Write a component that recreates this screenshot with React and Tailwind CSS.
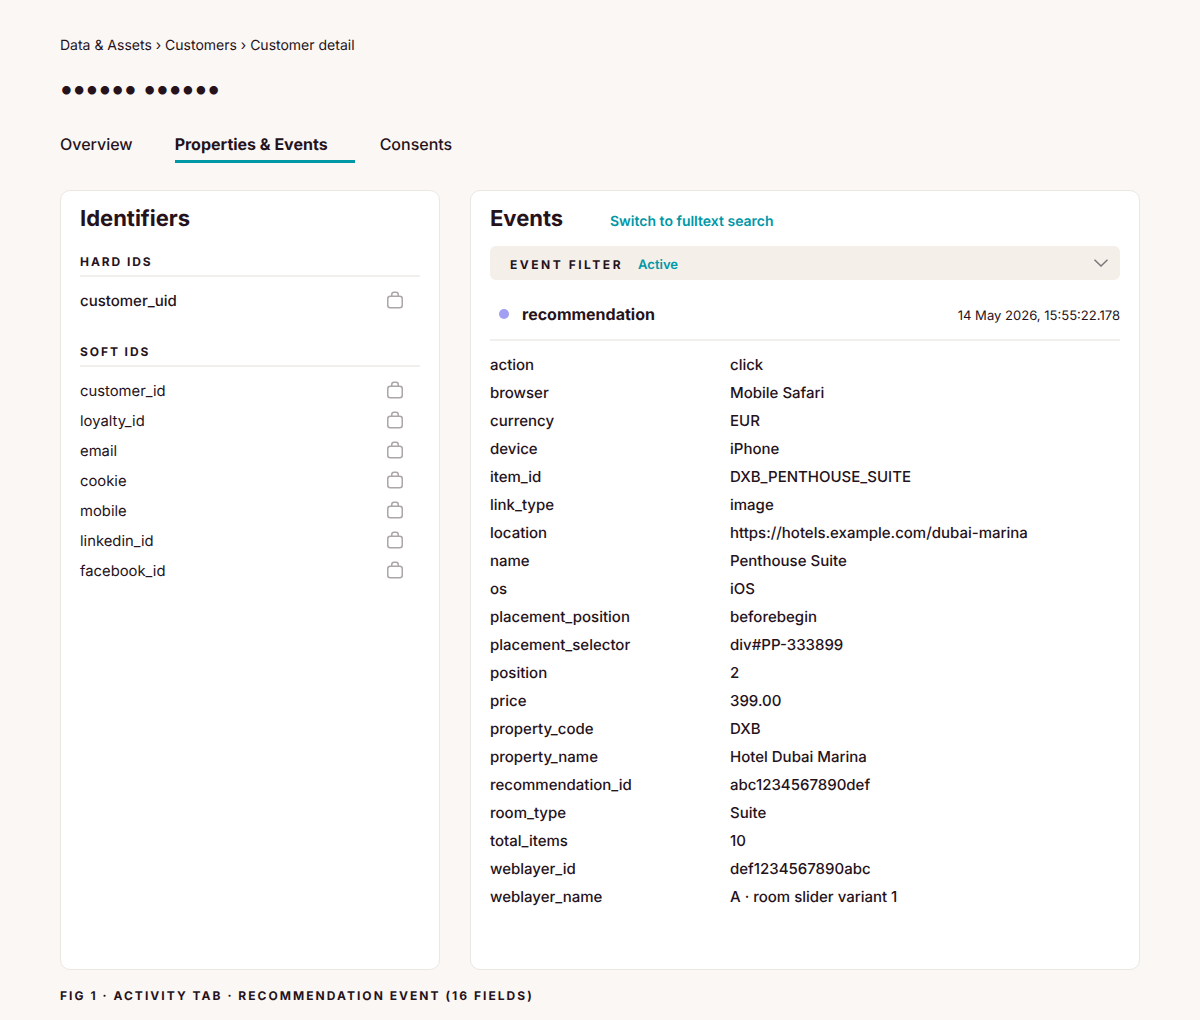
const hard = ["customer_uid"];
const soft = ["customer_id","loyalty_id","email","cookie","mobile","linkedin_id","facebook_id"];
const fields = [
["action","click"],["browser","Mobile Safari"],["currency","EUR"],["device","iPhone"],["item_id","DXB_PENTHOUSE_SUITE"],["link_type","image"],["location","https://hotels.example.com/dubai-marina"],["name","Penthouse Suite"],["os","iOS"],["placement_position","beforebegin"],["placement_selector","div#PP-333899"],["position","2"],["price","399.00"],["property_code","DXB"],["property_name","Hotel Dubai Marina"],["recommendation_id","abc1234567890def"],["room_type","Suite"],["total_items","10"],["weblayer_id","def1234567890abc"],["weblayer_name","A · room slider variant 1"],
];

function Lock() {
  return (
    <svg width="16" height="18" viewBox="0 0 16 18" fill="none" stroke="#aca6a8" strokeWidth="1.5" className="mr-[17px] shrink-0">
      <rect x="0.75" y="5.25" width="14.5" height="11.5" rx="2.5" />
      <path d="M4.75 5.25V3.5A2.25 2.25 0 0 1 7 1.25h2a2.25 2.25 0 0 1 2.25 2.25v1.75" />
    </svg>
  );
}

function IdRow({ name, strong }) {
  return (
    <div className={`flex h-[30px] items-center justify-between ${strong ? "text-[15px] font-medium" : "text-[14.8px]"}`}>
      <span className="pt-[2px]">{name}</span>
      <Lock />
    </div>
  );
}

function SectionHead({ children }) {
  return (
    <div className="border-b-2 border-[#f1efed] pb-[4px] text-[12px] leading-[18px] font-bold tracking-[0.16em]">{children}</div>
  );
}

export default function App() {
  return (
    <div className="h-[1020px] bg-[#faf7f4] px-[60px] pt-[36px] text-[#25121b] font-['Inter',sans-serif] [text-rendering:geometricPrecision]">
      <div className="text-[14px] leading-[20px]">Data &amp; Assets › Customers › Customer detail</div>
      <div className="mt-[16px] h-[32px] pt-[1px] text-[27px] leading-[32px] font-bold">•••••• ••••••</div>
      <div className="mt-[26px] flex h-[33px] text-[16px] leading-[24px] font-medium">
        <div className="mr-[43px] pt-[2px]">Overview</div>
        <div className="mr-[25px] -ml-px w-[180px] border-b-[3px] border-[#0097a7] pt-[2px] font-bold">Properties &amp; Events</div>
        <div className="pt-[2px]">Consents</div>
      </div>
      <div className="mt-[27px] flex h-[780px] gap-[30px]">
        <section className="w-[380px] rounded-[10px] border border-[#ebe7e3] bg-white px-[19px] pt-[13px]">
          <h2 className="text-[22px] leading-[30px] font-bold">Identifiers</h2>
          <div className="mt-[19px]"><SectionHead>HARD IDS</SectionHead></div>
          <div className="mt-[8px]">{hard.map((n) => <IdRow key={n} name={n} strong />)}</div>
          <div className="mt-[28px]"><SectionHead>SOFT IDS</SectionHead></div>
          <div className="mt-[8px]">{soft.map((n) => <IdRow key={n} name={n} />)}</div>
        </section>
        <section className="w-[670px] rounded-[10px] border border-[#ebe7e3] bg-white px-[19px] pt-[13px]">
          <div className="flex items-center">
            <h2 className="w-[120px] text-[22px] leading-[30px] font-bold">Events</h2>
            <span className="mt-[5px] text-[14px] font-semibold text-[#0097a7]">Switch to fulltext search</span>
          </div>
          <div className="mt-[12px] flex h-[34px] items-center justify-between rounded-[6px] bg-[#f4efe9] px-[20px] pr-[12px]">
            <div className="flex items-center gap-[15px] pt-[4px]">
              <span className="text-[12px] font-bold tracking-[0.21em]">EVENT FILTER</span>
              <span className="pt-[2px] text-[13px] font-semibold text-[#0097a7]">Active</span>
            </div>
            <svg width="14" height="8" viewBox="0 0 14 8" fill="none" stroke="#7f7578" strokeWidth="1.5"><path d="M0.5 0.75 7 7l6.5-6.25" /></svg>
          </div>
          <div className="mt-[11px] flex h-[50px] items-start justify-between border-b-2 border-[#f1efed] pt-[11px]">
            <div className="flex items-center">
              <span className="ml-[9px] mr-[13px] size-[10px] rounded-full bg-[#a29ff2]" />
              <span className="text-[16px] font-bold leading-[24px]">recommendation</span>
            </div>
            <span className="mt-[4px] text-[13.05px] leading-[20px]">14 May 2026, 15:55:22.178</span>
          </div>
          <div className="mt-[10px]">
            {fields.map(([k, v]) => (
              <div key={k} className="flex h-[28px] items-center text-[15px] font-medium">
                <span className="w-[240px]">{k}</span>
                <span>{v}</span>
              </div>
            ))}
          </div>
        </section>
      </div>
      <div className="mt-[17px] text-[12px] leading-[18px] font-bold tracking-[0.17em]">FIG 1 · ACTIVITY TAB · RECOMMENDATION EVENT (16 FIELDS)</div>
    </div>
  );
}
